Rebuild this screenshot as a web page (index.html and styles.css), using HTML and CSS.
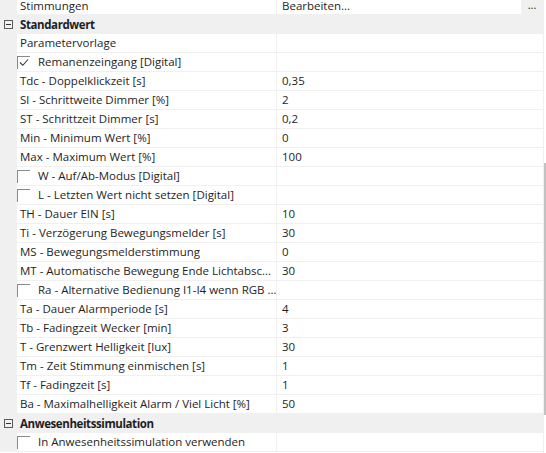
FILE: index.html
```html
<!DOCTYPE html>
<html lang="de">
<head>
<meta charset="utf-8">
<link rel="stylesheet" href="styles.css">
</head>
<body>
<div class="grid-wrap">
  <div class="grid">
    <div class="row first">
      <div class="gutter"></div>
      <div class="label">Stimmungen</div>
      <div class="value editor"><span class="field">Bearbeiten...</span><span class="dots">...</span></div>
    </div>
    <div class="row cat">
      <div class="gutter"><span class="toggle"></span></div>
      <div class="cat-label">Standardwert</div>
    </div>
    <div class="row"><div class="gutter"></div><div class="label">Parametervorlage</div><div class="value"></div></div>
    <div class="row"><div class="gutter"></div><div class="label chk"><span class="box checked"><svg width="10" height="9" viewBox="0 0 10 9"><path d="M1 4.5 L3.8 7.3 L9 1.5" fill="none" stroke="#333" stroke-width="1.1"/></svg></span>Remanenzeingang [Digital]</div><div class="value"></div></div>
    <div class="row"><div class="gutter"></div><div class="label">Tdc - Doppelklickzeit [s]</div><div class="value">0,35</div></div>
    <div class="row"><div class="gutter"></div><div class="label">Sl - Schrittweite Dimmer [%]</div><div class="value">2</div></div>
    <div class="row"><div class="gutter"></div><div class="label">ST - Schrittzeit Dimmer [s]</div><div class="value">0,2</div></div>
    <div class="row"><div class="gutter"></div><div class="label">Min - Minimum Wert [%]</div><div class="value">0</div></div>
    <div class="row"><div class="gutter"></div><div class="label">Max - Maximum Wert [%]</div><div class="value">100</div></div>
    <div class="row"><div class="gutter"></div><div class="label chk"><span class="box"></span>W - Auf/Ab-Modus [Digital]</div><div class="value"></div></div>
    <div class="row"><div class="gutter"></div><div class="label chk"><span class="box"></span>L - Letzten Wert nicht setzen [Digital]</div><div class="value"></div></div>
    <div class="row"><div class="gutter"></div><div class="label">TH - Dauer EIN [s]</div><div class="value">10</div></div>
    <div class="row"><div class="gutter"></div><div class="label">Ti - Verzögerung Bewegungsmelder [s]</div><div class="value">30</div></div>
    <div class="row"><div class="gutter"></div><div class="label">MS - Bewegungsmelderstimmung</div><div class="value">0</div></div>
    <div class="row"><div class="gutter"></div><div class="label">MT - Automatische Bewegung Ende Lichtabsc...</div><div class="value">30</div></div>
    <div class="row"><div class="gutter"></div><div class="label chk"><span class="box"></span>Ra - Alternative Bedienung I1-I4 wenn RGB ...</div><div class="value"></div></div>
    <div class="row"><div class="gutter"></div><div class="label">Ta - Dauer Alarmperiode [s]</div><div class="value">4</div></div>
    <div class="row"><div class="gutter"></div><div class="label">Tb - Fadingzeit Wecker [min]</div><div class="value">3</div></div>
    <div class="row"><div class="gutter"></div><div class="label">T - Grenzwert Helligkeit [lux]</div><div class="value">30</div></div>
    <div class="row"><div class="gutter"></div><div class="label">Tm - Zeit Stimmung einmischen [s]</div><div class="value">1</div></div>
    <div class="row"><div class="gutter"></div><div class="label">Tf - Fadingzeit [s]</div><div class="value">1</div></div>
    <div class="row"><div class="gutter"></div><div class="label">Ba - Maximalhelligkeit Alarm / Viel Licht [%]</div><div class="value">50</div></div>
    <div class="row cat">
      <div class="gutter"><span class="toggle"></span></div>
      <div class="cat-label">Anwesenheitssimulation</div>
    </div>
    <div class="row"><div class="gutter"></div><div class="label chk"><span class="box"></span>In Anwesenheitssimulation verwenden</div><div class="value"></div></div>
  </div>
  <div class="scrollbar"><div class="thumb"></div></div>
</div>
</body>
</html>
```
FILE: styles.css
```css
html, body {
  margin: 0;
  padding: 0;
  background: #ffffff;
}
body {
  font-family: "Segoe UI", "Open Sans", "Noto Sans", sans-serif;
  font-size: 11.5px;
  color: #1e1e1e;
  width: 546px;
  height: 453px;
  overflow: hidden;
}
.grid-wrap {
  display: flex;
  height: 453px;
}
.grid {
  flex: 1;
}
.row {
  display: flex;
  height: 19px;
}
.row.first {
  height: 15px;
}
.row.first .label,
.row.first .field {
  line-height: 11px;
  padding-top: 0;
}
.row.first .dots {
  line-height: 10px;
}
.gutter {
  width: 17px;
  flex: none;
  background: #f0f0f0;
  display: flex;
  align-items: center;
  justify-content: center;
  padding-right: 1px;
  box-sizing: border-box;
}
.label {
  width: 260px;
  flex: none;
  box-sizing: border-box;
  border-bottom: 1px solid #f0f0f0;
  border-right: 1px solid #f0f0f0;
  padding-left: 3px;
  line-height: 18px;
  white-space: nowrap;
  overflow: hidden;
}
.value {
  flex: 1;
  box-sizing: border-box;
  border-bottom: 1px solid #f0f0f0;
  padding-left: 5px;
  line-height: 18px;
}
.editor {
  display: flex;
  background: #f7f7f7;
  padding-left: 0;
}
.field {
  flex: 1;
  background: #ffffff;
  padding-left: 5px;
}
.dots {
  width: 22px;
  text-align: center;
  background: #f0f0f0;
  font-size: 11px;
}
.cat {
  background: #f0f0f0;
}
.cat-label {
  flex: 1;
  font-weight: bold;
  letter-spacing: -0.4px;
  padding-left: 3px;
  line-height: 19px;
}
.toggle {
  width: 9px;
  height: 9px;
  border: 1px solid #5a5a5a;
  box-sizing: border-box;
  position: relative;
}
.toggle::after {
  content: "";
  position: absolute;
  left: 1px;
  right: 1px;
  top: 3px;
  height: 1px;
  background: #333;
}
.chk {
  display: flex;
  align-items: center;
  padding-left: 0;
}
.box {
  width: 13px;
  height: 13px;
  flex: none;
  box-sizing: border-box;
  border-top: 1px solid #8a8a8a;
  border-left: 1px solid #8a8a8a;
  margin-right: 8px;
  display: flex;
  align-items: center;
  justify-content: center;
}
.scrollbar {
  width: 3px;
  flex: none;
  border-left: 1px solid #f0f0f0;
  box-sizing: border-box;
}
.thumb {
  margin-top: 163px;
  height: 252px;
  width: 2px;
  background: #c2c2c2;
}
```
